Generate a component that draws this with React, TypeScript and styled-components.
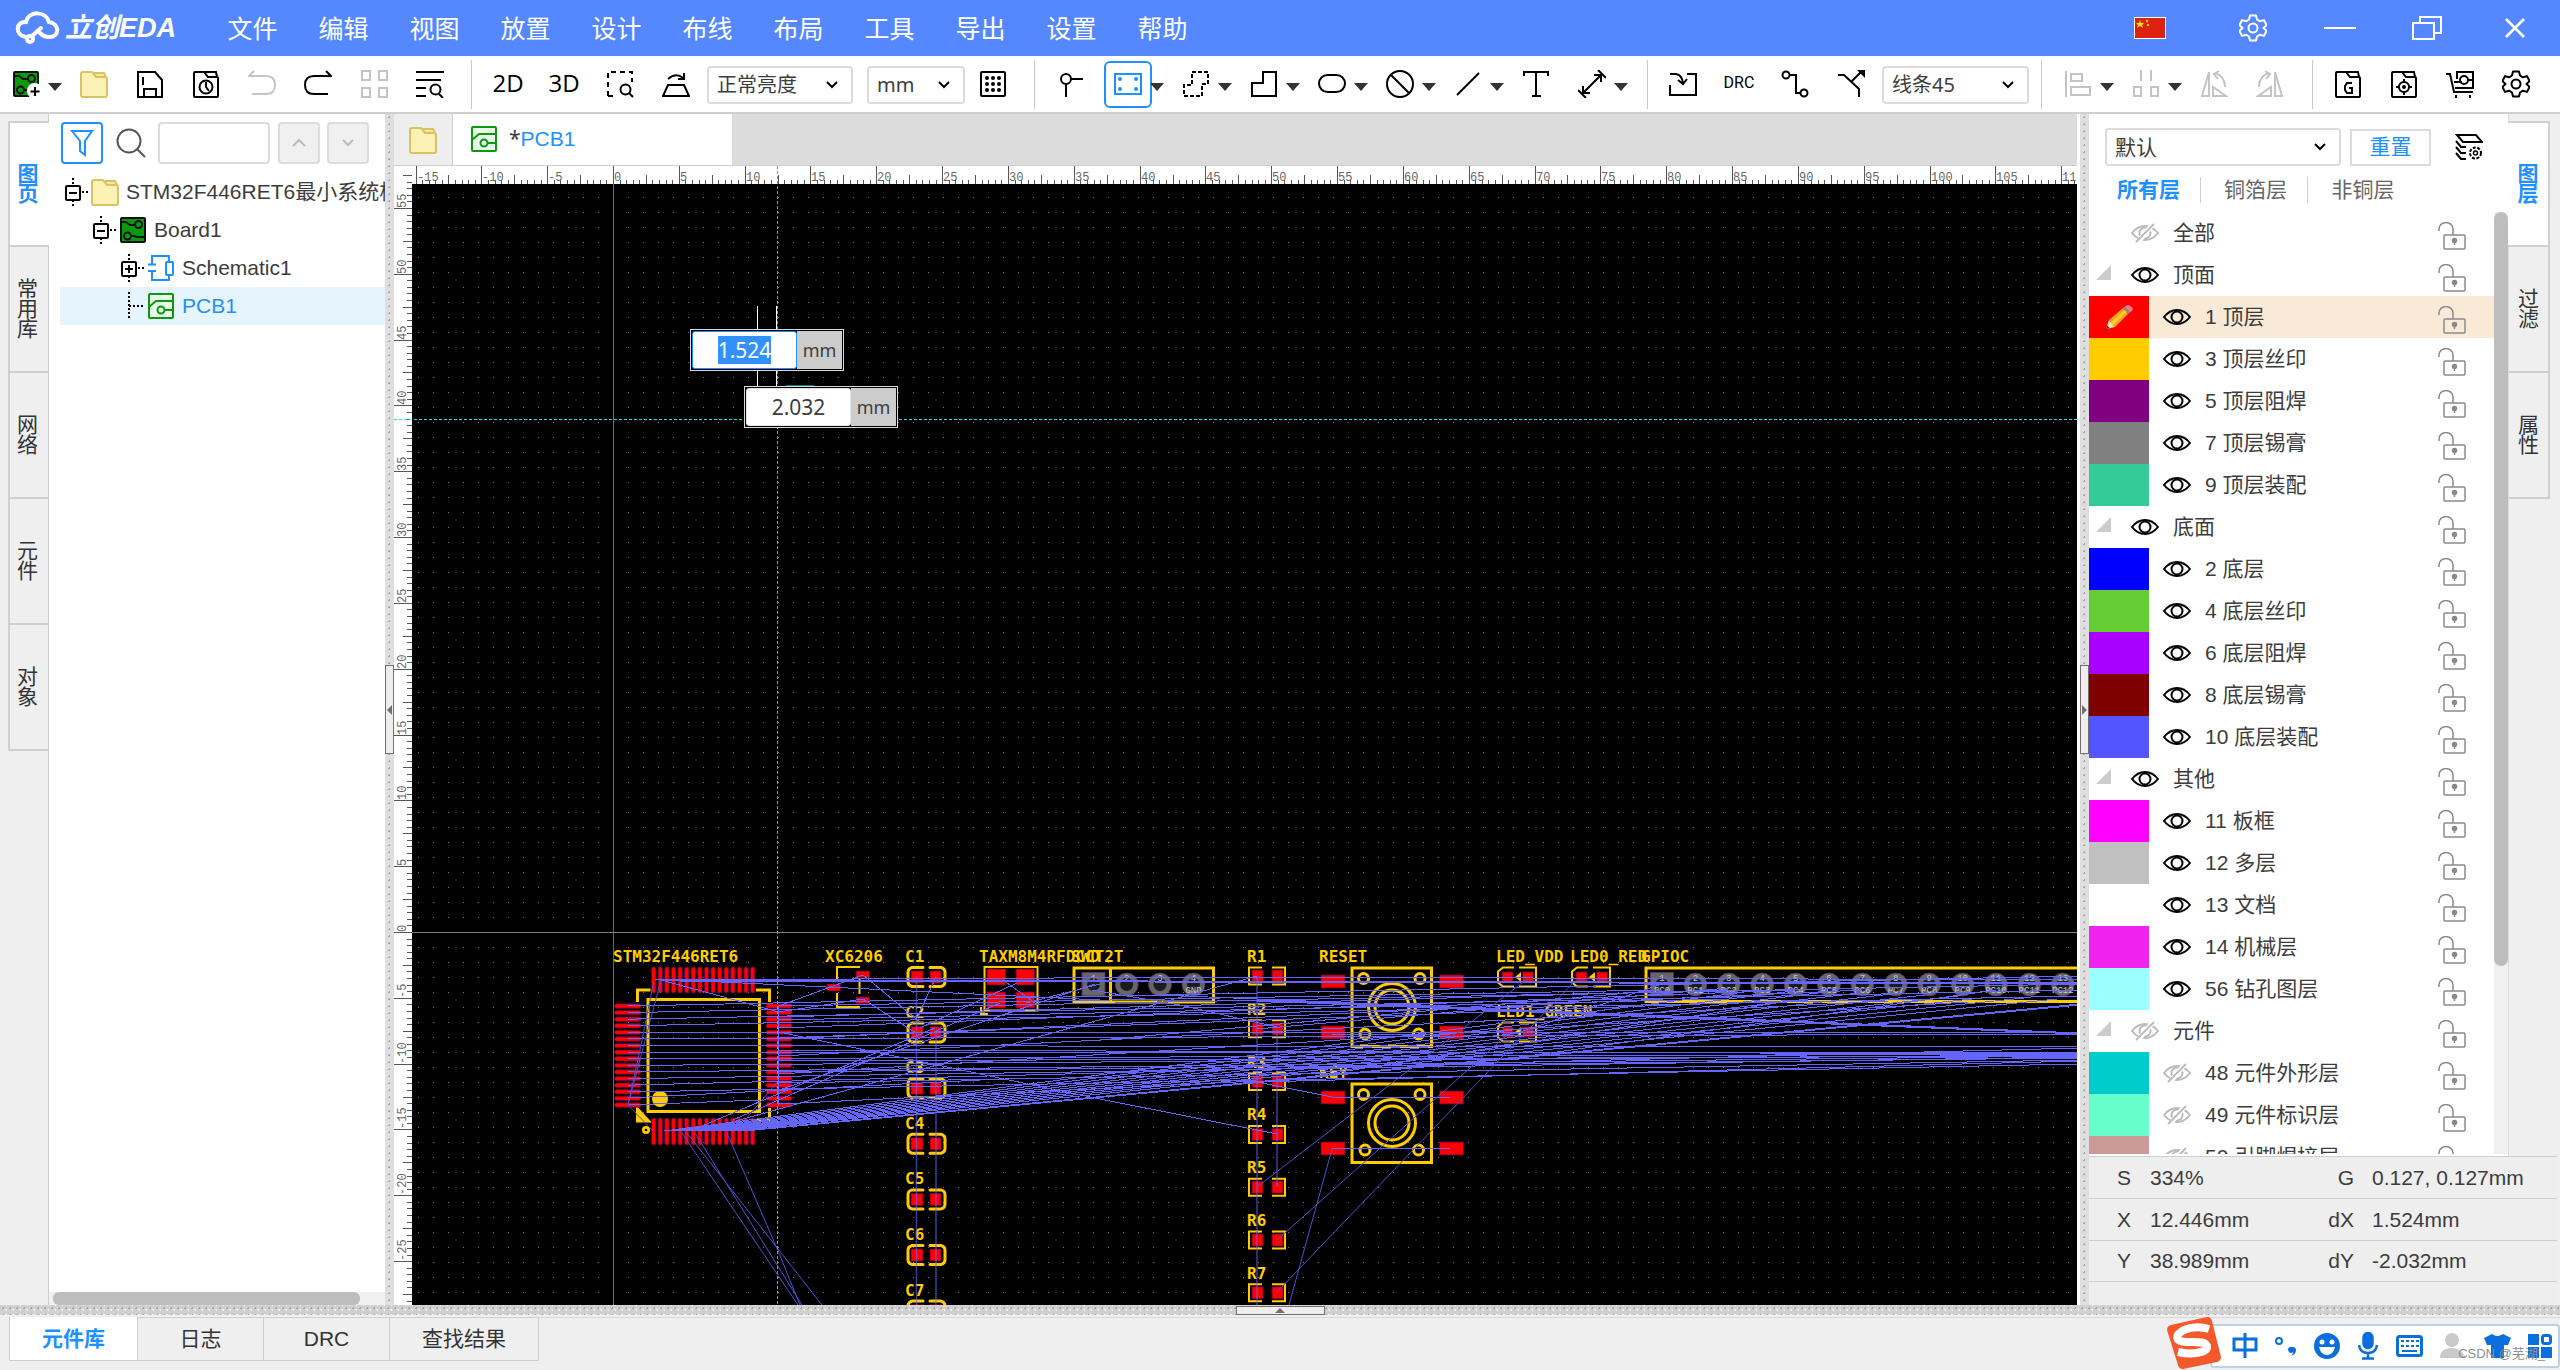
import React, { useEffect, useRef } from "react";
import styled, { createGlobalStyle, css } from "styled-components";

const sans = `"Liberation Sans", "Noto Sans CJK SC", sans-serif`;
const humanist = `"Noto Sans", "Noto Sans CJK SC", sans-serif`;
const mono = `"Liberation Mono", monospace`;
const silk = `"DejaVu Sans Mono", monospace`;

const GlobalStyle = createGlobalStyle`
  * { box-sizing: border-box; }
  body { margin: 0; background: #efefef; }
  button, input, select { font: inherit; color: inherit; margin: 0; }
  button { padding: 0; border: 0; background: none; cursor: pointer; }
  svg { display: block; flex: none; }
`;

const Shell = styled.div`
  height: 100vh;
  display: flex;
  flex-direction: column;
  overflow: hidden;
  position: relative;
  font-family: ${sans};
  font-size: 21px;
  line-height: 24px;
  color: #3c3c3c;
  background: #efefef;
`;

/* ---------- title bar ---------- */
const TitleBar = styled.header`
  height: 56px;
  flex: none;
  display: flex;
  align-items: center;
  background: #5588ff;
  color: #fff;
`;
const Brand = styled.a`
  display: flex;
  align-items: center;
  gap: 4px;
  width: 191px;
  padding-left: 15px;
  margin-right: 16px;
  color: #fff;
  text-decoration: none;
  white-space: nowrap;
`;
const BrandName = styled.span`
  font-size: 27px;
  line-height: 32px;
  font-weight: 700;
  font-style: italic;
`;
const Menu = styled.nav`
  display: flex;
  flex: 1;
`;
const MenuItem = styled.button`
  width: 91px;
  height: 56px;
  font-family: ${humanist};
  font-size: 25px;
  line-height: 32px;
`;
const WindowButtons = styled.div`
  display: flex;
  align-items: center;
  padding-right: 1px;
`;
const WindowButton = styled.button<{ $w: number }>`
  width: ${(p) => p.$w}px;
  height: 56px;
  display: grid;
  place-items: center;
`;

/* ---------- tool bar ---------- */
const Tool = styled.button<{ $active?: boolean; $off?: boolean }>`
  width: 48px;
  height: 47px;
  margin: 0 4px;
  flex: none;
  display: grid;
  place-items: center;
  border: 2px solid ${(p) => (p.$active ? "#1e90ff" : "transparent")};
  border-radius: 6px;
  color: ${(p) => (p.$active ? "#1e90ff" : p.$off ? "#c4c4c4" : "#000")};
`;
const ToolBar = styled.div`
  height: 58px;
  flex: none;
  display: flex;
  align-items: center;
  padding-right: 16px;
  background: #fff;
  border-bottom: 2px solid #cfcfcf;
  ${Tool}:first-child { margin-left: 2px; }
`;
const CaretButton = styled.button`
  width: 14px;
  height: 47px;
  margin: 0 4px 0 -6px;
  flex: none;
  display: grid;
  place-items: center;
  padding-top: 6px;
`;
const Divider = styled.span`
  width: 1px;
  height: 49px;
  flex: none;
  background: #c8c8c8;
`;
const Gap = styled.span<{ $w: number }>`
  width: ${(p) => p.$w}px;
  flex: none;
`;
const Spring = styled.span`
  flex: 1;
`;
const SelectBox = styled.span<{ $w: number }>`
  position: relative;
  width: ${(p) => p.$w}px;
  height: 38px;
  flex: none;
  margin-top: 2px;
  svg {
    position: absolute;
    right: 14px;
    top: 12px;
    pointer-events: none;
  }
`;
const Select = styled.select`
  appearance: none;
  width: 100%;
  height: 100%;
  padding: 0 36px 0 8px;
  border: 2px solid #dcdcdc;
  border-radius: 4px;
  background: #fff;
  font-family: ${humanist};
  font-size: 20px;
  line-height: 24px;
`;

/* ---------- work area ---------- */
const Work = styled.div`
  flex: 1;
  min-height: 0;
  display: flex;
`;
const Rail = styled.div<{ $right?: boolean }>`
  width: 49px;
  flex: none;
  display: flex;
  flex-direction: column;
  padding: ${(p) => (p.$right ? "7px 7px 0 0" : "7px 0 0 8px")};
  background: #efefef;
  ${(p) => (p.$right ? "border-left: 1px solid #dcdcdc;" : "border-right: 1px solid #cfcfcf;")}
`;
const RailTab = styled.button<{ $active?: boolean; $right?: boolean }>`
  height: 126px;
  flex: none;
  display: flex;
  align-items: center;
  justify-content: center;
  text-align: center;
  padding-right: ${(p) => (p.$right ? 0 : 3)}px;
  border: solid #cfcfcf;
  border-width: ${(p) => (p.$right ? "0 2px 2px 0" : "0 0 2px 2px")};
  font-size: 21px;
  line-height: 20px;
  color: #333;
  span {
    width: 22px;
    word-break: break-all;
  }
  ${(p) =>
    p.$active &&
    css`
      background: #fff;
      border-top-width: 2px;
      color: #1e90ff;
      font-weight: 700;
      ${p.$right ? "margin-left: -1px;" : "margin-right: -1px;"}
    `}
`;
const Splitter = styled.div`
  width: 9px;
  flex: none;
  display: flex;
  align-items: center;
  background-color: #dedede;
  background-image: radial-gradient(circle, #a6a6a6 1px, transparent 1px);
  background-size: 7px 7px;
  background-position: center top;
  background-repeat: repeat-y;
`;
const SplitterHandle = styled.button<{ $flat?: boolean }>`
  width: ${(p) => (p.$flat ? 89 : 9)}px;
  height: ${(p) => (p.$flat ? 9 : 89)}px;
  display: grid;
  place-items: center;
  background: #eee;
  border: 1px solid #7a6c6c;
`;
const BottomSplitter = styled.div`
  height: 10px;
  flex: none;
  display: flex;
  justify-content: center;
  align-items: flex-end;
  background-color: #d0d0d0;
  background-image: radial-gradient(circle, #a4a4a4 1px, transparent 1px),
    radial-gradient(circle, #f2f2f2 1px, transparent 1px);
  background-size: 7px 7px, 7px 5px;
  background-position: 0 0, 3px 2px;
`;

/* ---------- project panel ---------- */
const ProjectPanel = styled.aside`
  width: 336px;
  flex: none;
  display: flex;
  flex-direction: column;
  background: #fff;
  overflow: hidden;
`;
const FilterRow = styled.div`
  height: 59px;
  flex: none;
  display: flex;
  align-items: center;
  padding: 0 0 2px 12px;
`;
const FilterButton = styled.button`
  width: 42px;
  height: 42px;
  display: grid;
  place-items: center;
  border: 2px solid #1e90ff;
  border-radius: 4px;
  margin-right: 13px;
`;
const SearchInput = styled.input`
  width: 112px;
  height: 42px;
  margin: 0 8px 0 12px;
  border: 2px solid #dcdcdc;
  border-radius: 4px;
  background: #fff;
`;
const StepButton = styled.button`
  width: 42px;
  height: 42px;
  margin-right: 7px;
  display: grid;
  place-items: center;
  border: 2px solid #dcdcdc;
  border-radius: 4px;
  background: #f0f0f0;
`;
const Tree = styled.ul`
  list-style: none;
  margin: 0;
  padding: 0 0 0 11px;
  flex: 1;
`;
const TreeRow = styled.li<{ $level: number; $active?: boolean }>`
  height: 38px;
  display: flex;
  align-items: center;
  gap: 7px;
  padding-left: ${(p) => 4 + p.$level * 28}px;
  white-space: nowrap;
  background: ${(p) => (p.$active ? "#e6f5fd" : "none")};
  color: ${(p) => (p.$active ? "#1e90ff" : "#3c3c3c")};
  button { margin-right: -7px; }
`;
const HScroll = styled.div`
  height: 13px;
  background: #f0f0f0;
  padding-left: 4px;
  flex: none;
`;
const HThumb = styled.div`
  width: 307px;
  height: 13px;
  border-radius: 6px;
  background: #bdbdbd;
`;

/* ---------- editor ---------- */
const Editor = styled.main`
  flex: 1;
  min-width: 0;
  display: flex;
  flex-direction: column;
  background: #fff;
  border-right: 3px solid #fff;
`;
const TabStrip = styled.div`
  height: 52px;
  flex: none;
  display: flex;
  background: #dcdcdc;
  border-bottom: 1px solid #cfcfcf;
`;
const FolderTab = styled.button`
  width: 59px;
  display: grid;
  place-items: center;
  background: #eee;
  border-right: 1px solid #cfcfcf;
`;
const FileTab = styled.button`
  width: 279px;
  display: flex;
  align-items: center;
  gap: 11px;
  padding: 0 0 2px 17px;
  background: #fff;
  color: #3c3c3c;
  i { font-style: normal; font-family: ${humanist}; }
  b { font-weight: 400; color: #1e90ff; }
`;
const Board = styled.div`
  flex: 1;
  min-height: 0;
  position: relative;
  overflow: hidden;
`;
const Dimension = styled.label<{ $x: number; $y: number }>`
  position: absolute;
  left: ${(p) => p.$x}px;
  top: ${(p) => p.$y}px;
  width: 154px;
  height: 42px;
  display: flex;
  padding: 1px;
  background: #000;
  border: 1px solid #d8d8d8;
  font-family: ${humanist};
  font-size: 18px;
`;
const DimensionInput = styled.input<{ $focus?: boolean }>`
  width: 105px;
  height: 38px;
  padding: 0;
  text-align: center;
  border: 1px solid ${(p) => (p.$focus ? "#1e90ff" : "#e4e4e4")};
  border-radius: 3px;
  outline: none;
  font-size: 21px;
  &::selection { background: #3390ff; color: #fff; }
`;
const Unit = styled.span`
  flex: 1;
  display: grid;
  place-items: center;
  background: #ccc;
`;

/* ---------- layer panel ---------- */
const Side = styled.aside`
  width: 468px;
  flex: none;
  display: flex;
  flex-direction: column;
  background: #fff;
  margin-right: 3px;
`;
const SideTop = styled.div`
  flex: 1;
  min-height: 0;
  display: flex;
`;
const Layers = styled.section`
  flex: 1;
  min-width: 0;
  display: flex;
  flex-direction: column;
  background: #fff;
`;
const PresetRow = styled.div`
  display: flex;
  align-items: center;
  padding: 14px 0 0 16px;
  ${SelectBox} { margin: 0 9px 0 0; }
  ${Select} { font-family: ${sans}; font-size: 21px; padding-top: 2px; }
`;
const ResetButton = styled.button`
  width: 81px;
  height: 37px;
  border: 2px solid #dcdcdc;
  color: #1e90ff;
  margin-right: 24px;
`;
const LayerTabs = styled.div`
  display: flex;
  align-items: center;
  height: 46px;
  padding: 2px 0 0 5px;
`;
const LayerTab = styled.button<{ $active?: boolean }>`
  width: 107px;
  height: 26px;
  padding-left: 3px;
  border-right: 1px solid #d0d0d0;
  color: ${(p) => (p.$active ? "#1e90ff" : "#666")};
  font-weight: ${(p) => (p.$active ? 700 : 400)};
  &:last-child { border: 0; }
`;
const LayerScroll = styled.div`
  flex: 1;
  min-height: 0;
  display: flex;
  overflow: hidden;
  margin-bottom: 2px;
`;
const LayerList = styled.ul`
  list-style: none;
  margin: 0;
  padding: 0;
  flex: 1;
`;
const LayerRow = styled.li<{ $active?: boolean }>`
  height: 42px;
  display: flex;
  align-items: center;
  background: ${(p) => (p.$active ? "#f9ead8" : "none")};
`;
const Swatch = styled.span<{ $color: string }>`
  width: 60px;
  height: 42px;
  flex: none;
  display: grid;
  place-items: center;
  background: ${(p) => p.$color};
`;
const Fold = styled.button`
  width: 28px;
  height: 42px;
  padding: 0 6px 6px 7px;
  display: grid;
  place-items: center;
`;
const EyeButton = styled.button`
  width: 56px;
  height: 42px;
  display: grid;
  place-items: center;
`;
const LayerName = styled.span`
  flex: 1;
`;
const LockButton = styled.button`
  width: 28px;
  height: 42px;
  margin-right: 28px;
  padding-top: 6px;
`;
const VScroll = styled.div`
  width: 14px;
  background: #f0f0f0;
`;
const VThumb = styled.div`
  height: 80%;
  border-radius: 7px;
  background: #bdbdbd;
`;
const Status = styled.dl`
  margin: 0;
  height: 149px;
  flex: none;
  background: #eee;
`;
const StatusRow = styled.div`
  height: 42px;
  display: grid;
  grid-template-columns: 61px 172px 32px 18px 1fr;
  align-items: center;
  border: solid #cfcfcf;
  border-width: 1px 0 0;
  &:last-child { border-bottom-width: 1px; }
  dt { padding-left: 28px; }
  dt + dd + dt { padding: 0; text-align: right; grid-column: 3; }
  dd { margin: 0; }
  dd:last-child { grid-column: 5; }
`;

/* ---------- bottom bar ---------- */
const BottomBar = styled.footer`
  height: 55px;
  flex: none;
  display: flex;
  align-items: flex-start;
  padding: 2px 0 0 9px;
  background: #efefef;
`;
const BottomTab = styled.button<{ $w: number; $active?: boolean }>`
  width: ${(p) => p.$w}px;
  height: 44px;
  border: solid #cfcfcf;
  border-width: ${(p) => (p.$active ? "0 1px 1px 1px" : "1px 1px 1px 0")};
  background: ${(p) => (p.$active ? "#fff" : "none")};
  color: ${(p) => (p.$active ? "#1e90ff" : "#333")};
  font-weight: ${(p) => (p.$active ? 700 : 400)};
`;
const BottomFill = styled.span`
  flex: 1;
  border-top: 1px solid #d8d8d8;
`;
const ImeBar = styled.div`
  position: absolute;
  right: 0;
  bottom: 2px;
  width: 350px;
  height: 44px;
  display: flex;
  align-items: center;
  justify-content: space-between;
  padding: 0 6px 0 20px;
  background: #fff;
  border: 2px solid #bcd0e8;
  border-radius: 4px;
`;
const ImeLogo = styled.div`
  position: absolute;
  right: 338px;
  bottom: 0;
`;
const Watermark = styled.span`
  position: absolute;
  right: 15px;
  bottom: 6px;
  font-size: 13px;
  line-height: 20px;
  color: #8b8f96;
`;

/* ---------- icons ---------- */
const Glyph: React.FC<{ children: React.ReactNode }> = ({ children }) => (
  <svg width="28" height="28" viewBox="0 0 28 28" fill="none" stroke="currentColor" strokeWidth="2" aria-hidden>
    {children}
  </svg>
);
const Tri = () => (
  <svg width="14" height="8" viewBox="0 0 14 8" aria-hidden>
    <path d="M0 0h14L7 8z" fill="#333" />
  </svg>
);
const Chevron = ({ up, color = "#000" }: { up?: boolean; color?: string }) => (
  <svg width="14" height="14" viewBox="0 0 14 14" fill="none" stroke={color} strokeWidth="2" aria-hidden>
    <path d={up ? "M1 10l6-6 6 6" : "M2 4l5 5 5-5"} />
  </svg>
);
const boardBody = (
  <>
    <rect x="2" y="2" width="24" height="24" rx="1" fill="#0b9a0b" stroke="#111" />
    <path d="M2 6h5l4 3h5M26 21h-8l-3-1h-3" stroke="#111" />
    <circle cx="19.500" cy="8.500" r="3.500" fill="#0b9a0b" stroke="#111" />
    <circle cx="8.500" cy="20" r="3.500" fill="#0b9a0b" stroke="#111" />
  </>
);
const NewBoard = () => (
  <Glyph>
    {boardBody}
    <circle cx="23" cy="21" r="8" fill="#fff" stroke="none" />
    <path d="M23 17v9M18.500 21.500h9" stroke="#000" />
  </Glyph>
);
const BoardIcon = () => <Glyph>{boardBody}</Glyph>;
const Folder = () => (
  <Glyph>
    <path d="M14 3h10l2 4h-10" fill="#f5e89c" stroke="#d9c263" />
    <path d="M1 4q0-2 2-2h9l4 5h9q2 0 2 2v16q0 2-2 2H3q-2 0-2-2z" fill="#fbf1b4" stroke="#d9c263" />
  </Glyph>
);
const folderOutline = <path d="M2 3q0-1 1-1h9l4 5h9q1 0 1 1v18q0 1-1 1H3q-1 0-1-1zM13 2h11l1 5M17 7h8" />;
const PcbIcon = () => (
  <Glyph>
    <rect x="2" y="2" width="24" height="24" rx="1" stroke="#0b9a0b" fill="#eafaea" />
    <path d="M2 15l7-6h17M17 18h9" stroke="#0b9a0b" />
    <circle cx="14" cy="18" r="3.500" stroke="#0b9a0b" />
  </Glyph>
);
const SchIcon = () => (
  <Glyph>
    <path d="M5 10V2h17v6M5 17v9h17v-6M1 10.500h8M1 17h8" stroke="#1e90ff" />
    <rect x="19" y="8" width="7" height="13" rx="1" stroke="#1e90ff" />
  </Glyph>
);
const gearShape = (
  <>
    <path
      d="M11 1.500h6l1 4 3 1.800 4-1.200 2.500 5-3 2.900 3 2.900-2.500 5-4-1.200-3 1.800-1 4h-6l-1-4-3-1.800-4 1.200-2.500-5 3-2.900-3-2.900 2.500-5 4 1.200 3-1.800z"
      strokeLinejoin="round"
    />
    <circle cx="14" cy="14" r="4.500" />
  </>
);
const Eye = ({ off }: { off?: boolean }) => (
  <svg width="28" height="20" viewBox="0 0 28 20" fill="none" stroke={off ? "#bbb" : "#000"} strokeWidth="2" aria-hidden>
    <path d="M1 10q5.500-7 13-7t13 7q-5.500 7-13 7t-13-7z" />
    <circle cx="14" cy="10" r="5.500" />
    {off && (
      <>
        <path d="M7 19L22 1" stroke="#fff" strokeWidth="5" />
        <path d="M5 19L23 1" />
      </>
    )}
  </svg>
);
const Lock = () => (
  <svg width="28" height="28" viewBox="0 0 28 28" fill="none" stroke="#8a8a8a" strokeWidth="1.500" aria-hidden>
    <path d="M1 9V7a7 6.500 0 0 1 14 0v6" />
    <rect x="6" y="13" width="21" height="14" rx="1" />
    <circle cx="16.500" cy="18.500" r="2" fill="#8a8a8a" />
    <path d="M16.500 19v4" />
  </svg>
);
const icons: Record<string, React.ReactNode> = {
  save: <path d="M2 2h17l7 8v17H2zM8 27v-8h12v8M7 7v8" />,
  history: (
    <>
      {folderOutline}
      <circle cx="14" cy="17" r="6.500" />
      <path d="M14 12v5l3 4" />
    </>
  ),
  undo: <path d="M6 1L1 6h17q9 0 9 9t-9 9H4" />,
  redo: <path d="M22 1l5 5H10q-9 0-9 9t9 9h14" />,
  tiles: <path d="M2 1h8v9H2zM19 1h8v9h-8zM2 18h8v9H2zM19 18h8v9h-8z" />,
  find: (
    <>
      <path d="M0 2h28M0 10h25M0 18h10M0 26h10M23 24l4 4" />
      <circle cx="19.500" cy="19.500" r="5" />
    </>
  ),
  fit: (
    <>
      <path d="M2 26V2h24v10M2 26h8" strokeDasharray="5 4" />
      <circle cx="19.500" cy="19.500" r="5" />
      <path d="M23 23l4 4" />
    </>
  ),
  flip: <path d="M6 15h16l5 11H1zM6 9q8-7 15-1M16 9h6V3" />,
  grid: (
    <>
      <rect x="2" y="2" width="24" height="24" rx="1" />
      {[8, 14, 20].map((x) => [8, 14, 20].map((y) => <circle key={`${x}-${y}`} cx={x} cy={y} r="1" fill="currentColor" />))}
    </>
  ),
  pin: (
    <>
      <circle cx="8" cy="9" r="5" />
      <path d="M13 9h12M8 14v13" />
    </>
  ),
  area: (
    <>
      <rect x="1" y="4" width="26" height="20" />
      {[6, 22].map((x) => [9, 19].map((y) => <circle key={`${x}-${y}`} cx={x} cy={y} r="1" fill="currentColor" />))}
    </>
  ),
  dashPoly: <path d="M10 2h16v12h-6v12H2V15h8z" strokeDasharray="4 2" />,
  poly: <path d="M13 2h13v24H2V13h11z" />,
  pad: <rect x="1" y="5" width="26" height="17" rx="8.500" />,
  keepout: (
    <>
      <circle cx="14" cy="14" r="13" />
      <path d="M5 5l18 18" />
    </>
  ),
  line: <path d="M3 25L25 3" />,
  text: <path d="M2 6V2h24v4M14 2v24M10 26h9" />,
  dim: <path d="M5 23L23 5M16 5h7v7M12 23H5v-7M20 0l8 8M0 20l8 8" />,
  importIn: <path d="M1 15v10h26V4h-9M1 4h6q6 1 7 9M9 10l5 4 4-5" />,
  route: (
    <>
      <circle cx="5" cy="5" r="3.500" />
      <circle cx="23" cy="23" r="3.500" />
      <path d="M8 5h7v18h4" />
    </>
  ),
  fanout: (
    <>
      <path d="M1 5h6l15 14v8M15 11l9-9" />
      <path d="M20 0h8v8z" fill="currentColor" stroke="none" />
    </>
  ),
  alignL: <path d="M2 1v26M7 4h11v7H7zM7 17h19v8H7z" />,
  distribute: <path d="M9 0v11M19 0v11M2 17h7v9H2zM19 17h7v9h-7z" />,
  rotL: <path d="M9 2L2 26h7zM13 17v9h13zM15 3q10 3 10 14M19 1l-5 3 4 5" />,
  rotR: <path d="M19 2l7 24h-7zM15 17v9H2zM13 3Q3 6 3 17M9 1l5 3-4 5" />,
  gerber: (
    <>
      {folderOutline}
      <path d="M18 13h-5l-2 3v4l2 3h5v-5h-3" />
    </>
  ),
  coord: (
    <>
      {folderOutline}
      <circle cx="14" cy="17" r="5" />
      <path d="M14 9v4M14 21v4M6 17h4M18 17h4" />
      <circle cx="14" cy="17" r="1" />
    </>
  ),
  cart: (
    <>
      <path d="M0 4h4l4 18h19M9 18h18V2H11v7M8 12h8" />
      <circle cx="18" cy="10" r="4" />
      <path d="M22 10h5M10 25v3M24 25v3" />
    </>
  ),
  gear: gearShape,
};
const ToolText = styled.span`
  font-family: "Open Sans", sans-serif;
  font-size: 24px;
  line-height: 28px;
  padding-bottom: 3px;
`;
const SmallToolText = styled(ToolText)`
  font-family: "Roboto", sans-serif;
  font-size: 16px;
`;
const ToolButton: React.FC<{ name: string; label: string; off?: boolean; active?: boolean; caret?: boolean }> = ({
  name,
  label,
  off,
  active,
  caret,
}) => (
  <>
    <Tool aria-label={label} $off={off} $active={active}>
      <Glyph>{icons[name]}</Glyph>
    </Tool>
    {caret && (
      <CaretButton aria-label={`${label} ▾`}>
        <Tri />
      </CaretButton>
    )}
  </>
);

/* ---------- PCB drawing ---------- */
const YELLOW = "#ffcc00";
const NET = "#6464ff";
const range = (n: number) => Array.from({ length: n }, (_, i) => i);
/* screen pixels for one millimetre */
const PX = 13.165;

const Label: React.FC<{ x: number; y: number; children: string }> = ({ x, y, children }) => (
  <text x={x} y={y} fontFamily={silk} fontWeight="700" fontSize="16" fill={YELLOW}>
    {children}
  </text>
);
const Pad: React.FC<{ x: number; y: number; w: number; h: number; r?: number }> = ({ x, y, w, h, r = 0 }) => (
  <rect x={x} y={y} width={w} height={h} rx={r} fill="#ff0000" stroke="#50004a" strokeWidth=".8" />
);
const Capacitor: React.FC<{ i: number }> = ({ i }) => {
  const y = 977 + 55.6 * i;
  return (
    <g>
      <Label x={905} y={y - 15}>{`C${i + 1}`}</Label>
      <path
        d={`M923 ${y - 9.5}h-11q-4 1-4 5v9q0 4 4 5h11M930 ${y - 9.5}h11q4 1 4 5v9q0 4-4 5h-11`}
        fill="none"
        stroke={YELLOW}
        strokeWidth="3"
        strokeLinecap="round"
      />
      <Pad x={911} y={y - 6} w={12} h={12} />
      <Pad x={930} y={y - 6} w={11} h={12} />
    </g>
  );
};
const Resistor: React.FC<{ i: number }> = ({ i }) => {
  const y = 976 + 52.8 * i;
  return (
    <g>
      <Label x={1247} y={y - 14}>{`R${i + 1}`}</Label>
      <path d={`M1262 ${y - 8.5}h-13v17h13M1272 ${y - 8.5}h13v17h-13`} fill="none" stroke={YELLOW} strokeWidth="2" />
      <Pad x={1252} y={y - 6} w={11} h={12} />
      <Pad x={1272} y={y - 6} w={11} h={12} />
    </g>
  );
};
const Switch: React.FC<{ dy: number; name: string }> = ({ dy, name }) => (
  <g transform={`translate(0 ${dy})`}>
    <Label x={1319} y={962}>{name}</Label>
    <g fill="none" stroke={YELLOW} strokeWidth="3">
      <rect x="1352" y="968" width="79.500" height="78.500" />
      <circle cx="1392" cy="1007" r="23.500" />
      <circle cx="1392" cy="1007" r="17" />
      <circle cx="1363.500" cy="978.500" r="5" />
      <circle cx="1420" cy="978.500" r="5" />
      <circle cx="1365" cy="1034" r="5" />
      <circle cx="1418.500" cy="1034" r="5" />
    </g>
    {[1321, 1439.5].map((x) => [975, 1026].map((y) => <Pad key={`${x}-${y}`} x={x} y={y} w={24} h={13} />))}
  </g>
);
const Led: React.FC<{ dx: number; dy: number; name: string }> = ({ dx, dy, name }) => (
  <g transform={`translate(${dx} ${dy})`}>
    <Label x={1496} y={962}>{name}</Label>
    <path d="M1514 967.500h-11l-5 4v11l5 4h11M1519 967.500h17v19h-17" fill="none" stroke={YELLOW} strokeWidth="2" />
    <Pad x={1502} y={972} w={11} h={10} />
    <Pad x={1522.5} y={972} w={11} h={10} />
    <path d="M1515 977l6-5v10z" fill={YELLOW} />
  </g>
);
const HolePad: React.FC<{ x: number; n: number; net?: string; square?: boolean }> = ({ x, n, net, square }) => (
  <g>
    {square ? (
      <rect x={x - 11.5} y="972.500" width="23" height="23.500" fill="#666" stroke="#5a2a6a" />
    ) : (
      <circle cx={x} cy="984.500" r="11.500" fill="#666" stroke="#5a2a6a" strokeWidth=".7" />
    )}
    <circle cx={x} cy="984.500" r="6.500" fill="#1c1c1c" />
    <g fontFamily={mono} fontSize="9" fill="#c8c8c8" textAnchor="middle">
      <text x={x} y="981">{n}</text>
      {net && <text x={x} y="993">{net}</text>}
    </g>
  </g>
);

type Seg = [number, number, number, number];
const leftTargets = [976, 984, 990, 996, 1033, 1034, 1047, 1053, 1054, 1055, 1056, 1057, 1048];
const flatNets: Seg[] = [
  [655, 980, 1257, 977],
  [665, 980, 1340, 982],
  [672, 980, 2080, 983],
  [680, 981, 2080, 983],
  [690, 981, 2080, 984],
  [1257, 977, 2080, 980],
  [661, 980, 779, 1012],
  [700, 981, 1100, 1000],
  [779, 1006, 863, 975],
  [779, 1012, 863, 999],
  [863, 975, 920, 1022],
  [863, 999, 916, 1033],
  [916, 1020, 936, 977],
  [1003, 980, 1035, 1003],
  [1026, 1003, 1100, 984],
  [920, 1028, 1017, 983],
  [733, 1120, 1000, 1003],
  [690, 1131, 935, 1028],
  [700, 1131, 1257, 976],
  [779, 1090, 1095, 984],
  [779, 1032, 1100, 1099],
  [628, 1092, 1257, 1080],
  [628, 1098, 1000, 1079],
  [628, 1105, 760, 1100],
  [779, 1104, 1257, 1081],
  [1092, 990, 1180, 1005],
  [1180, 1005, 1277, 1027],
  [1160, 995, 2080, 1033],
  [1257, 1001, 2080, 1034],
  [1257, 1000, 2080, 1033],
  [1100, 1099, 1277, 1134],
  [1257, 1082, 1332, 1097],
  [1257, 1082, 2080, 1061],
  [1277, 1080, 2080, 1064],
  [1332, 1097.5, 1450, 1097.5],
  [1332, 1148.5, 1450, 1148.5],
  [1332, 1034, 1450, 1034],
  [1332, 982.5, 1450, 982.5],
  [1520, 1032, 1662, 984],
  [1100, 1040, 1662, 990],
  [1257, 1029, 1729, 988],
  [1277, 1082, 1795, 1000],
  [1500, 1060, 1996, 990],
  ...leftTargets.map((t, i): Seg => [628, 1006 + 6.6 * i, 2080, t]),
  ...range(8).map((i): Seg => [779, 1006 + 11 * i, i < 4 ? 1662 + 66.8 * i : 2080, i < 4 ? 990 : 1046 + i * 2]),
  ...range(10).map((i): Seg => [664 + 7 * i, 1131, 1760 + 33 * i, 990 + i]),
  [736, 1131, 2080, 1004],
  [744, 1131, 2080, 1005],
  ...range(4).map((i): Seg => [779, 1020 + 18 * i, 1728 + 80 * i, 999 + i]),
];
const steepNets: Seg[] = [
  [661, 980, 628, 1105],
  [654, 980, 640, 1050],
  [640, 1050, 628, 1105],
  [628, 1105, 653, 1131],
  [682, 1133, 798, 1305],
  [687, 1133, 822, 1305],
  [695, 1133, 802, 1305],
  [727, 1133, 779, 1253],
  [779, 1253, 800, 1305],
  [779, 1080, 745, 1120],
  [1257, 1187, 1527, 979],
  [1277, 1240, 1507, 1035],
  [1277, 1292, 1573, 983],
  [1332, 1149, 1289, 1305],
];

const lineSet = (list: Seg[]) => list.map(([a, b, c, d]) => `M${a} ${b}L${c} ${d}`).join("");

const PcbDrawing = () => (
  <svg width="100%" height="100%" aria-label="PCB">
    <defs>
      <pattern id="dots" width="15" height="15" patternUnits="userSpaceOnUse" x="613" y="932">
        <rect width="1" height="1" fill="#767676" />
      </pattern>
      <clipPath id="field">
        <rect x="412" y="184" width="4000" height="3000" />
      </clipPath>
    </defs>
    <g transform="translate(-394 -166)">
      <g clipPath="url(#field)">
        <rect x="412" y="184" width="4000" height="3000" fill="#000" />
        <rect x="412" y="184" width="4000" height="3000" fill="url(#dots)" />
        <g shapeRendering="crispEdges">
          <rect x="613" y="184" width="1" height="3000" fill="#6a6a6a" />
          <rect x="412" y="932" width="4000" height="1" fill="#7c7c7c" />
        </g>

        <g>
          <Label x={613} y={962}>STM32F446RET6</Label>
          <rect x="648" y="999.500" width="111.500" height="112" fill="none" stroke={YELLOW} strokeWidth="3" />
          <path d="M637.500 1002v-12h13M756 990h13.500v12M769.500 1108v12h-13" fill="none" stroke={YELLOW} strokeWidth="3" />
          <path d="M637.500 1109v12h11z" fill={YELLOW} stroke={YELLOW} strokeWidth="3" />
          <circle cx="660" cy="1099" r="8" fill={YELLOW} />
          <circle cx="646" cy="1130" r="2.700" fill="none" stroke={YELLOW} strokeWidth="2.700" />
          {range(16).map((i) => (
            <g key={i}>
              <Pad x={651.5 + 6.6 * i} y={967} w={4.4} h={26} r={2} />
              <Pad x={651.5 + 6.6 * i} y={1118} w={4.4} h={27} r={2} />
              <Pad x={614.5} y={1003.8 + 6.6 * i} w={26.5} h={4.4} r={2} />
              <Pad x={766} y={1003.8 + 6.6 * i} w={26} h={4.4} r={2} />
            </g>
          ))}
        </g>
        <g>
          <Label x={825} y={962}>XC6206</Label>
          <path d="M860 967h-23v12M837 993v14h23M859.500 978v16" fill="none" stroke={YELLOW} strokeWidth="2" />
          <Pad x={856} y={971} w={13.5} h={6.5} />
          <Pad x={827} y={984} w={13.5} h={7} />
          <Pad x={856} y={997} w={13.5} h={6.5} />
        </g>
        {range(7).map((i) => (
          <Capacitor key={i} i={i} />
        ))}
        <g>
          <Label x={979} y={962}>TAXM8M4RFDCCT2T</Label>
          <rect x="984.500" y="967" width="53" height="43.500" fill="none" stroke={YELLOW} strokeWidth="2" />
          <path d="M981 1007v7h7" fill="none" stroke={YELLOW} strokeWidth="2" />
          <Pad x={987} y={969} w={18.5} h={16} />
          <Pad x={1016} y={969} w={18.5} h={16} />
          <Pad x={987} y={992} w={18.5} h={16} />
          <Pad x={1016} y={992} w={18.5} h={16} />
        </g>
        <g>
          <Label x={1071} y={962}>SWD</Label>
          <path d="M1074 968h139.500v34H1074zM1110.500 968v34" fill="none" stroke={YELLOW} strokeWidth="3" />
          <HolePad x={1093.5} n={1} square />
          <HolePad x={1126.7} n={2} />
          <HolePad x={1160} n={3} />
          <HolePad x={1193.5} n={4} net="GND" />
        </g>
        {range(7).map((i) => (
          <Resistor key={i} i={i} />
        ))}
        <Switch dy={0} name="RESET" />
        <Switch dy={116} name="KEY" />
        <Led dx={0} dy={0} name="LED_VDD" />
        <Led dx={74} dy={0} name="LED0_RED" />
        <Led dx={0} dy={55} name="LED1_GREEN" />
        <Label x={1641} y={962}>GPIOC</Label>
        <path d="M2400 968H1646v33.500h800" fill="none" stroke={YELLOW} strokeWidth="3" />
        {range(14).map((i) => (
          <HolePad key={i} x={1662 + 33.4 * i} n={i + 1} net={`PC${i}`} square={i === 0} />
        ))}

        <path d={lineSet(flatNets)} stroke={NET} shapeRendering="crispEdges" fill="none" strokeWidth="1" />
        <path d={lineSet(steepNets)} stroke="#5050d0" strokeWidth="1" fill="none" />
        <path
          d="M916.500 977V1305M936 1033V1305M1257 976V1305M1277 1030V1187"
          stroke={NET}
          strokeOpacity=".6"
          strokeWidth="1.500"
          fill="none"
        />
        <path d="M778.500 1006V1105" stroke={NET} strokeWidth="1" />
        <path d="M757.500 306V400M776.500 306V400" stroke="#fff" shapeRendering="crispEdges" />
      </g>

      {/* rulers */}
      <rect x="394" y="166" width="4000" height="18" fill="#fff" />
      <rect x="394" y="166" width="18" height="3000" fill="#fff" />
      <g shapeRendering="crispEdges" fill="#555">
        {range(460).map((k) => {
          const i = k - 32;
          const len = i % 10 === 0 ? 18 : i % 5 === 0 ? 9 : 4;
          const x = Math.round(613 + (i * PX) / 2);
          return x > 411 ? <rect key={i} x={x} y={184 - len} width="1" height={len} /> : null;
        })}
        {range(230).map((k) => {
          const i = 115 - k;
          const len = i % 10 === 0 ? 18 : i % 5 === 0 ? 9 : 5;
          return <rect key={i} x={412 - len} y={Math.round(932 - (i * PX) / 2)} width={len} height="1" />;
        })}
      </g>
      <g fontFamily={mono} fontSize="12" fill="#666">
        {range(26).map((k) => {
          const v = (k - 3) * 5;
          return (
            <text key={v} x={Math.round(614 + v * PX)} y="181">
              {v}
            </text>
          );
        })}
        {range(17).map((k) => {
          const v = 55 - k * 5;
          return (
            <text key={v} transform={`translate(406 ${Math.round(932 - v * PX)}) rotate(-90)`}>
              {v}
            </text>
          );
        })}
      </g>
      <g shapeRendering="crispEdges" stroke="#14c8c8" strokeDasharray="3 2" fill="none">
        <path d="M777.500 166V3000" />
        <path d="M394 419.500H4400" stroke="#19e6e6" />
      </g>
      <path d="M786 386.500h28" stroke="#0ff" strokeWidth="2" />
    </g>
  </svg>
);

/* ---------- data ---------- */
type Layer = { name: string; color?: string; off?: boolean; group?: boolean; active?: boolean };
const layers: Layer[] = [
  { name: "全部", off: true },
  { name: "顶面", group: true },
  { name: "1 顶层", color: "#ff0000", active: true },
  { name: "3 顶层丝印", color: "#ffcc00" },
  { name: "5 顶层阻焊", color: "#800080" },
  { name: "7 顶层锡膏", color: "#808080" },
  { name: "9 顶层装配", color: "#33cc99" },
  { name: "底面", group: true },
  { name: "2 底层", color: "#0000ff" },
  { name: "4 底层丝印", color: "#66cc33" },
  { name: "6 底层阻焊", color: "#aa00ff" },
  { name: "8 底层锡膏", color: "#800000" },
  { name: "10 底层装配", color: "#5555ff" },
  { name: "其他", group: true },
  { name: "11 板框", color: "#ff00ff" },
  { name: "12 多层", color: "#c0c0c0" },
  { name: "13 文档", color: "#ffffff" },
  { name: "14 机械层", color: "#f022f0" },
  { name: "56 钻孔图层", color: "#99ffff" },
  { name: "元件", group: true, off: true },
  { name: "48 元件外形层", color: "#00cccc", off: true },
  { name: "49 元件标识层", color: "#66ffcc", off: true },
  { name: "50 引脚焊接层", color: "#cc9999", off: true },
];
const menus = ["文件", "编辑", "视图", "放置", "设计", "布线", "布局", "工具", "导出", "设置", "帮助"];

const Pencil = () => (
  <svg width="28" height="26" viewBox="0 0 28 26" aria-hidden>
    <path d="M1 25l3-9 6 7z" fill="#f7dfa8" />
    <path d="M1 25l1-3.500 2.500 2.500z" fill="#333" />
    <path d="M4 16L18 4l5 6L10 23z" fill="#f5a914" />
    <path d="M6 18.500L20 6l1.500 2L8 21z" fill="#ffc93a" />
    <path d="M18 4l2-1.500 5 6-2 1.500z" fill="#8d8d8d" />
    <path d="M20 2.500q3-3 6 0t1 4l-2 2z" fill="#e8808c" />
  </svg>
);
const Expander = ({ plus }: { plus?: boolean }) => (
  <svg width="27" height="38" viewBox="0 0 27 38" fill="none" stroke="#000" strokeWidth="2" aria-hidden>
    <path d="M9 5v7M9 27v7M18 19h7" strokeDasharray="2 2" />
    <rect x="2" y="13" width="14" height="14" rx="1" />
    <path d={plus ? "M5 20h8M9 16v8" : "M5 20h8"} />
  </svg>
);
const Branch = () => (
  <svg width="27" height="38" viewBox="0 0 27 38" fill="none" stroke="#000" strokeWidth="2" aria-hidden>
    <path d="M9 5v27M9 19h16" strokeDasharray="2 2" />
  </svg>
);

export default function App() {
  const dx = useRef<HTMLInputElement>(null);
  useEffect(() => {
    dx.current?.focus({ preventScroll: true });
    dx.current?.select();
  }, []);
  return (
    <Shell>
      <GlobalStyle />
      <TitleBar>
        <Brand href="#">
          <svg width="46" height="34" viewBox="0 0 46 34" fill="none" stroke="#fff" strokeWidth="4" strokeLinecap="round" aria-hidden>
            <path d="M11 26C-1 24 1 10 11 11 14-1 31 0 34 11c11 2 11 15 0 15-5 0-7-2-9-4" />
            <path d="M17 25l9-8" />
            <circle cx="15" cy="28" r="3" />
          </svg>
          <BrandName>立创EDA</BrandName>
        </Brand>
        <Menu>
          {menus.map((m) => (
            <MenuItem key={m}>{m}</MenuItem>
          ))}
        </Menu>
        <WindowButtons>
          <WindowButton $w={118} aria-label="语言">
            <svg width="32" height="22" viewBox="0 0 32 22" aria-hidden>
              <rect x=".5" y=".5" width="31" height="21" fill="#de2010" stroke="#fff" />
              <path d="M6 3l1 3h3l-2 2 1 3-3-2-3 2 1-3-2-2h3z" fill="#ffde00" />
              <circle cx="13" cy="4" r="1.200" fill="#ffde00" />
              <circle cx="14" cy="8" r="1.200" fill="#ffde00" />
            </svg>
          </WindowButton>
          <WindowButton $w={88} aria-label="设置">
            <Glyph>{gearShape}</Glyph>
          </WindowButton>
          <WindowButton $w={86} aria-label="最小化">
            <svg width="32" height="4" viewBox="0 0 32 4"><path d="M0 2h32" stroke="#fff" strokeWidth="2" /></svg>
          </WindowButton>
          <WindowButton $w={88} aria-label="还原">
            <svg width="30" height="24" viewBox="0 0 30 24" fill="none" stroke="#fff" strokeWidth="2">
              <path d="M1 7h21v16H1zM8 7V1h21v16h-7" />
            </svg>
          </WindowButton>
          <WindowButton $w={88} aria-label="关闭">
            <svg width="20" height="20" viewBox="0 0 20 20" fill="none" stroke="#fff" strokeWidth="2.500">
              <path d="M1 1l18 18M19 1L1 19" />
            </svg>
          </WindowButton>
        </WindowButtons>
      </TitleBar>

      <ToolBar>
        <Tool aria-label="新建">
          <NewBoard />
        </Tool>
        <CaretButton aria-label="新建 ▾">
          <Tri />
        </CaretButton>
        <Tool aria-label="打开">
          <Folder />
        </Tool>
        <ToolButton name="save" label="保存" />
        <ToolButton name="history" label="历史" />
        <ToolButton name="undo" label="撤销" off />
        <ToolButton name="redo" label="重做" />
        <ToolButton name="tiles" label="阵列" off />
        <ToolButton name="find" label="查找" />
        <Gap $w={13} />
        <Divider />
        <Gap $w={8} />
        <Tool aria-label="2D"><ToolText>2D</ToolText></Tool>
        <Tool aria-label="3D"><ToolText>3D</ToolText></Tool>
        <ToolButton name="fit" label="适应" />
        <ToolButton name="flip" label="翻转板子" />
        <Gap $w={3} />
        <SelectBox $w={146}>
          <Select aria-label="亮度"><option>正常亮度</option></Select>
          <Chevron />
        </SelectBox>
        <Gap $w={14} />
        <SelectBox $w={98}>
          <Select aria-label="单位"><option>mm</option></Select>
          <Chevron />
        </SelectBox>
        <ToolButton name="grid" label="网格" />
        <Gap $w={13} />
        <Divider />
        <Gap $w={9} />
        <ToolButton name="pin" label="焊盘" />
        <ToolButton name="area" label="区域" active caret />
        <ToolButton name="dashPoly" label="约束区域" caret />
        <ToolButton name="poly" label="填充" caret />
        <ToolButton name="pad" label="挖槽" caret />
        <ToolButton name="keepout" label="禁止区域" caret />
        <ToolButton name="line" label="线条" caret />
        <ToolButton name="text" label="文本" />
        <ToolButton name="dim" label="尺寸" caret />
        <Gap $w={15} />
        <Divider />
        <Gap $w={7} />
        <ToolButton name="importIn" label="导入变更" />
        <Tool aria-label="DRC"><SmallToolText>DRC</SmallToolText></Tool>
        <ToolButton name="route" label="布线" />
        <ToolButton name="fanout" label="扇出" />
        <Gap $w={3} />
        <SelectBox $w={147}>
          <Select aria-label="拐角"><option>线条45</option></Select>
          <Chevron />
        </SelectBox>
        <Spring />
        <Divider />
        <Gap $w={8} />
        <ToolButton name="alignL" label="对齐" off caret />
        <ToolButton name="distribute" label="分布" off caret />
        <ToolButton name="rotL" label="左旋" off />
        <ToolButton name="rotR" label="右旋" off />
        <Gap $w={14} />
        <Divider />
        <Gap $w={7} />
        <ToolButton name="gerber" label="Gerber" />
        <ToolButton name="coord" label="坐标" />
        <ToolButton name="cart" label="下单" />
        <ToolButton name="gear" label="设置" />
      </ToolBar>

      <Work>
        <Rail>
          {["图页", "常用库", "网络", "元件", "对象"].map((t, i) => (
            <RailTab key={t} $active={i === 0}>
              <span>{t}</span>
            </RailTab>
          ))}
        </Rail>
        <ProjectPanel>
          <FilterRow>
            <FilterButton aria-label="过滤">
              <svg width="24" height="28" viewBox="0 0 24 28" fill="none" stroke="#1e90ff" strokeWidth="2">
                <path d="M2 2h20l-7 10v14l-5-4V12z" />
              </svg>
            </FilterButton>
            <svg width="30" height="30" viewBox="0 0 30 30" fill="none" stroke="#555" strokeWidth="2" aria-hidden>
              <circle cx="13" cy="13" r="11.500" />
              <path d="M21 21l8 8" />
            </svg>
            <SearchInput aria-label="搜索" />
            <StepButton aria-label="上一个"><Chevron up color="#bbb" /></StepButton>
            <StepButton aria-label="下一个"><Chevron color="#bbb" /></StepButton>
          </FilterRow>
          <Tree>
            <TreeRow $level={0}>
              <button aria-label="折叠"><Expander /></button>
              <Folder />
              STM32F446RET6最小系统板
            </TreeRow>
            <TreeRow $level={1}>
              <button aria-label="折叠"><Expander /></button>
              <BoardIcon />
              Board1
            </TreeRow>
            <TreeRow $level={2}>
              <button aria-label="展开"><Expander plus /></button>
              <SchIcon />
              Schematic1
            </TreeRow>
            <TreeRow $level={2} $active>
              <button aria-label="打开 PCB1"><Branch /></button>
              <PcbIcon />
              PCB1
            </TreeRow>
          </Tree>
          <HScroll>
            <HThumb />
          </HScroll>
        </ProjectPanel>
        <Splitter>
          <SplitterHandle aria-label="收起左侧">
            <svg width="5" height="10" viewBox="0 0 5 10"><path d="M5 0v10L0 5z" fill="#7a6c6c" /></svg>
          </SplitterHandle>
        </Splitter>
        <Editor>
          <TabStrip>
            <FolderTab aria-label="开始页"><Folder /></FolderTab>
            <FileTab>
              <PcbIcon />
              <span><i>*</i><b>PCB1</b></span>
            </FileTab>
          </TabStrip>
          <Board>
            <PcbDrawing />
            <Dimension $x={296} $y={163}>
              <DimensionInput ref={dx} $focus defaultValue="1.524" aria-label="宽" />
              <Unit>mm</Unit>
            </Dimension>
            <Dimension $x={350} $y={220}>
              <DimensionInput defaultValue="2.032" aria-label="高" />
              <Unit>mm</Unit>
            </Dimension>
          </Board>
        </Editor>
        <Splitter>
          <SplitterHandle aria-label="收起右侧">
            <svg width="5" height="10" viewBox="0 0 5 10"><path d="M0 0v10l5-5z" fill="#7a6c6c" /></svg>
          </SplitterHandle>
        </Splitter>
        <Side>
          <SideTop>
            <Layers>
              <PresetRow>
                <SelectBox $w={236}>
                  <Select aria-label="图层配置"><option>默认</option></Select>
                  <Chevron />
                </SelectBox>
                <ResetButton>重置</ResetButton>
                <button aria-label="图层管理">
                  <svg width="28" height="28" viewBox="0 0 28 28" fill="none" stroke="#000" strokeWidth="2">
                    <path d="M2 2h19l6 7H8zM1 8l5 6h5M1 14l5 6h5M1 20l5 6h5" />
                    <circle cx="20.500" cy="20" r="5.500" strokeDasharray="3 1.500" />
                    <circle cx="20.500" cy="20" r="2" strokeWidth="1.500" />
                  </svg>
                </button>
              </PresetRow>
              <LayerTabs>
                <LayerTab $active>所有层</LayerTab>
                <LayerTab>铜箔层</LayerTab>
                <LayerTab>非铜层</LayerTab>
              </LayerTabs>
              <LayerScroll>
                <LayerList>
                  {layers.map((l) => (
                    <LayerRow key={l.name} $active={l.active}>
                      {l.color ? (
                        <Swatch $color={l.color}>{l.active && <Pencil />}</Swatch>
                      ) : l.group ? (
                        <Fold aria-label="折叠">
                          <svg width="15" height="15" viewBox="0 0 15 15"><path d="M15 0v15H0z" fill="#ccc" /></svg>
                        </Fold>
                      ) : (
                        <Gap $w={28} />
                      )}
                      <EyeButton aria-label={`显示 ${l.name}`}>
                        <Eye off={l.off} />
                      </EyeButton>
                      <LayerName>{l.name}</LayerName>
                      <LockButton aria-label={`锁定 ${l.name}`}>
                        <Lock />
                      </LockButton>
                    </LayerRow>
                  ))}
                </LayerList>
                <VScroll>
                  <VThumb />
                </VScroll>
              </LayerScroll>
            </Layers>
            <Rail $right>
              {["图层", "过滤", "属性"].map((t, i) => (
                <RailTab key={t} $right $active={i === 0}>
                  <span>{t}</span>
                </RailTab>
              ))}
            </Rail>
          </SideTop>
          <Status>
            <StatusRow>
              <dt>S</dt><dd>334%</dd><dt>G</dt><dd>0.127, 0.127mm</dd>
            </StatusRow>
            <StatusRow>
              <dt>X</dt><dd>12.446mm</dd><dt>dX</dt><dd>1.524mm</dd>
            </StatusRow>
            <StatusRow>
              <dt>Y</dt><dd>38.989mm</dd><dt>dY</dt><dd>-2.032mm</dd>
            </StatusRow>
          </Status>
        </Side>
      </Work>

      <BottomSplitter>
        <SplitterHandle $flat aria-label="展开底部">
          <svg width="10" height="5" viewBox="0 0 10 5"><path d="M0 5h10L5 0z" fill="#7a6c6c" /></svg>
        </SplitterHandle>
      </BottomSplitter>
      <BottomBar>
        <BottomTab $w={129} $active>元件库</BottomTab>
        <BottomTab $w={126}>日志</BottomTab>
        <BottomTab $w={126}>DRC</BottomTab>
        <BottomTab $w={149}>查找结果</BottomTab>
        <BottomFill />
      </BottomBar>

      <ImeBar>
        <svg width="26" height="26" viewBox="0 0 26 26" fill="none" stroke="#0a6fdc" strokeWidth="3">
          <path d="M2 6h22v11H2zM13 0v25" />
        </svg>
        <svg width="22" height="22" viewBox="0 0 22 22" fill="none" stroke="#0a6fdc" strokeWidth="2">
          <circle cx="4" cy="6" r="3" />
          <path d="M17 12a3 3 0 1 0 1 5q0 3-3 4 6-1 6-6 0-3-4-3z" fill="#0a6fdc" stroke="none" />
        </svg>
        <svg width="26" height="26" viewBox="0 0 26 26">
          <circle cx="13" cy="13" r="13" fill="#0a6fdc" />
          <circle cx="8" cy="9" r="2.500" fill="#fff" />
          <circle cx="18" cy="9" r="2.500" fill="#fff" />
          <path d="M5 14h16q-2 8-8 8t-8-8z" fill="#fff" />
        </svg>
        <svg width="22" height="28" viewBox="0 0 22 28" fill="none" stroke="#0a6fdc" strokeWidth="2.500">
          <rect x="6.500" y="1" width="9" height="15" rx="4.500" fill="#0a6fdc" />
          <path d="M2 13q1 8 9 8t9-8M11 21v6M5 26.500h12" />
        </svg>
        <svg width="27" height="22" viewBox="0 0 27 22" fill="none" stroke="#0a6fdc" strokeWidth="2">
          <rect x="1.500" y="1.500" width="24" height="19" rx="2" strokeWidth="3" />
          <path d="M5 6h3M10 6h3M15 6h3M20 6h3M5 11h3M10 11h3M15 11h3M20 11h3M6 16h15" />
        </svg>
        <svg width="27" height="26" viewBox="0 0 27 26" fill="#c9c9c9">
          <circle cx="12" cy="7" r="7" />
          <path d="M0 25q0-10 12-10 9 0 14 10z" />
        </svg>
        <svg width="27" height="24" viewBox="0 0 27 24" fill="#0a6fdc">
          <path d="M0 4l8-4q5 4 11 0l8 4-3 7h-4v13H7V11H3z" />
        </svg>
        <svg width="24" height="24" viewBox="0 0 24 24" fill="none" stroke="#0a6fdc" strokeWidth="3">
          <rect x="1.500" y="1.500" width="8" height="8" fill="#0a6fdc" />
          <rect x="14.500" y="1.500" width="8" height="8" rx="2" />
          <rect x="1.500" y="14.500" width="8" height="8" fill="#0a6fdc" />
          <rect x="14.500" y="14.500" width="8" height="8" fill="#0a6fdc" />
        </svg>
      </ImeBar>
      <ImeLogo>
        <svg width="56" height="54" viewBox="0 0 56 54" aria-hidden>
          <path d="M5 9L41 1q4 0 5 4l9 36q0 4-4 5l-34 7q-4 0-5-4L1 14q0-4 4-5z" fill="#f4592b" />
          <path d="M43 13Q30 9 18 14c-10 5-9 12 3 12 10 0 18-1 20 4 1 7-16 9-29 6" fill="none" stroke="#fff" strokeWidth="8" />
        </svg>
      </ImeLogo>
      <Watermark>CSDN @芜湖_</Watermark>
    </Shell>
  );
}
